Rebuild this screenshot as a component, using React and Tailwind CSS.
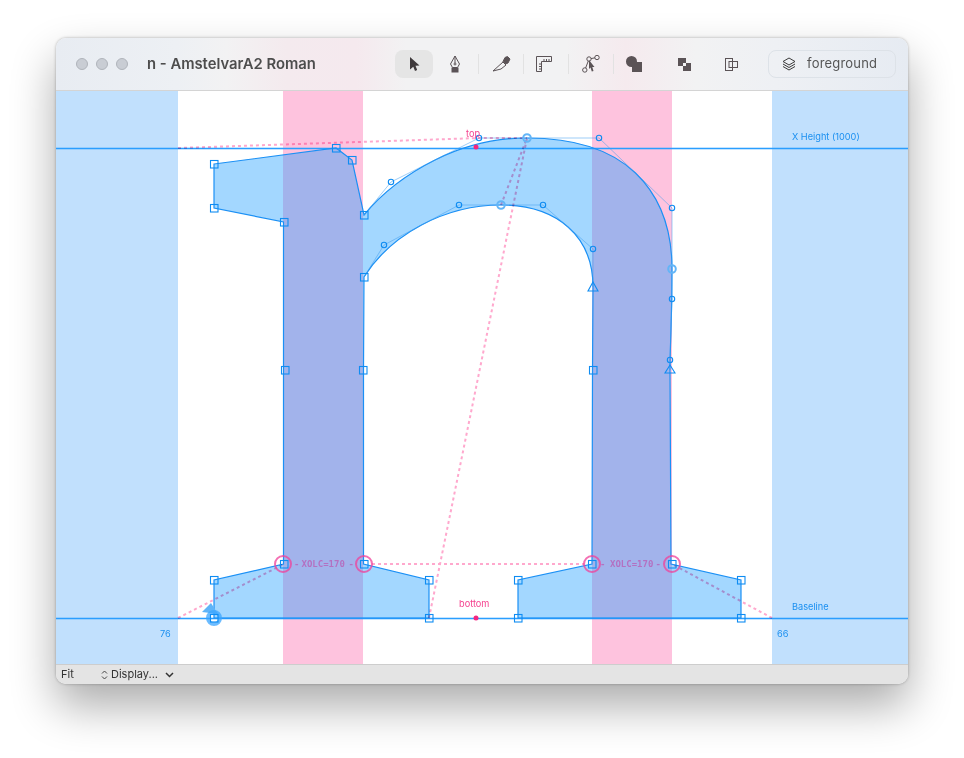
import React from "react";

const squares = [
  [214, 164], [214, 208], [284, 222], [336, 148], [352, 160], [364, 215], [364, 277],
  [285, 370], [363, 370], [593, 370], [284, 564], [364, 564], [214, 580], [214, 618],
  [429, 580], [429, 618], [518, 580], [518, 618], [592, 564], [672, 564], [741, 580], [741, 618],
];
const handles = [
  [391, 182], [479, 138], [599, 138], [672, 208], [672, 299], [670, 360],
  [593, 249], [543, 205], [459, 205], [384, 245],
];
const smooth = [[527, 138], [501, 205], [672, 269]];
const rings = [[283, 564], [364, 564], [592, 564], [672, 564]];

// the curves are quadratic, with on-curve points implied halfway between handles
const outline =
  "M214 164 L336 148 L352 160 L364 215 Q391 182 435 160 Q479 138 527 138 Q599 138 635.5 173 Q672 208 672 269 Q672 299 671 329.5 Q670 360 670 370 L671 564 L741 580 L741 618 L518 618 L518 580 L592 564 L592.5 370 L593 287 Q593 249 568 227 Q543 205 501 205 Q459 205 421.5 225 Q384 245 364 277 L363.5 370 L363.5 564 L429 580 L429 618 L214 618 L214 580 L283.5 564 L283.5 370 L283.5 222 L214 208 Z";

const Divider = () => <div className="w-px h-[20px] bg-[#e2e2e2]" />;

const Glyph = () => (
  <svg className="absolute inset-0 w-full h-full" viewBox="56 91 852 573">
    {/* metric lines */}
    <rect x="56" y="147" width="852" height="3" fill="#3ba5ff" opacity="0.3" />
    <rect x="56" y="148" width="852" height="1" fill="#2a9eff" />
    <rect x="56" y="617" width="852" height="3" fill="#3ba5ff" opacity="0.3" />
    <rect x="56" y="618" width="852" height="1" fill="#2a9eff" />

    <path d={outline} fill="#1a9bff" fillOpacity="0.4" stroke="#1b90f5" strokeWidth="1.2" />

    {/* control arms */}
    <g fill="none" stroke="#3d9df0" strokeOpacity="0.5" strokeWidth="1">
      <path d="M364 215 L391 182 L479 138 L527 138 L599 138 L672 208 L672 269 L672 299 L670 360 L670 370" />
      <path d="M593 287 L593 249 L543 205 L501 205 L459 205 L384 245 L364 277" />
    </g>

    {/* dashed guides */}
    <g className="mix-blend-multiply" fill="none" stroke="#ffa8cd" strokeWidth="2" strokeDasharray="3 3">
      <path d="M178 148 L479 138 L527 138" />
      <path d="M429 618 L527 138" />
      <path d="M178 618 L284 564" />
      <path d="M772 618 L672 564" />
      <path d="M372 564 L584 564" />
      <path d="M501 205 L527 138" />
    </g>

    {/* measurement */}
    {rings.map(([x, y]) => (
      <circle key={x} cx={x} cy={y} r="8" fill="none" stroke="#f0409a" strokeOpacity="0.75" strokeWidth="2" />
    ))}
    <g fontFamily="'DejaVu Sans Mono', monospace" fontWeight="700" fontSize="9" fill="#b766bb" opacity="0.85">
      <text x="294" y="567">-</text>
      <text x="301.5" y="567">XOLC=170</text>
      <text x="348.5" y="567">-</text>
      <text x="600" y="567">-</text>
      <text x="610" y="567">XOLC=170</text>
      <text x="655.5" y="567">-</text>
    </g>

    {/* start point */}
    <path d="M202 612 L211 603 L218 614 Z" fill="#5fb4f8" />
    <circle cx="214" cy="618" r="6" fill="none" stroke="#3ba5ff" strokeOpacity="0.75" strokeWidth="4" />

    {/* points */}
    <g fill="none" stroke="#0f8cf2" strokeWidth="1.1">
      {squares.map(([x, y]) => (
        <rect key={`${x}-${y}`} x={x - 3.5} y={y - 3.5} width="7.5" height="7.5" />
      ))}
      {handles.map(([x, y]) => (
        <circle key={`${x}-${y}`} cx={x} cy={y} r="2.7" />
      ))}
      <path d="M593 282 L598 291 L588 291 Z" />
      <path d="M670 365 L675 373 L665 373 Z" />
    </g>
    <g fill="none" stroke="#63b5f7" strokeWidth="2">
      {smooth.map(([x, y]) => (
        <circle key={x} cx={x} cy={y} r="3.8" />
      ))}
    </g>

    {/* anchors and labels */}
    <circle cx="476" cy="147" r="2.5" fill="#f5267f" />
    <circle cx="476" cy="618" r="2.5" fill="#f5267f" />
    <g fontFamily="Inter, sans-serif" fontSize="9.2">
      <text x="466" y="137" fill="#f5408e">top</text>
      <text x="459" y="607" fill="#f5408e">bottom</text>
      <text x="792" y="140" fill="#1a8ff0">X Height (1000)</text>
      <text x="792" y="610" fill="#1a8ff0">Baseline</text>
      <text x="160" y="637" fill="#1a8ff0">76</text>
      <text x="777" y="637" fill="#1a8ff0">66</text>
    </g>
  </svg>
);

const App = () => {
  return (
    <div className="w-[964px] h-[758px] bg-white pt-[38px] pl-[56px] overflow-hidden">
      <div className="w-[852px] h-[646px] flex flex-col rounded-[10px] overflow-hidden shadow-[0_22px_45px_rgba(0,0,0,0.33),0_0_3px_rgba(0,0,0,0.3)]">
        {/* title bar */}
        <div className="h-[53px] shrink-0 flex items-center border-b border-[#d4d4d4] bg-[linear-gradient(90deg,#e8ecf2_0px,#edf0f4_120px,#f2f2f3_170px,#f4eaee_230px,#f5e9ee_300px,#f2f2f3_350px,#f2f2f3_510px,#f5eaee_570px,#f2f2f3_640px,#eef0f4_720px,#e6ebf2_852px)]">
          <div className="flex gap-[8px] ml-[20px]">
            <div className="w-[12px] h-[12px] rounded-full bg-[#c9cdd4] border border-[#b0b4bb]" />
            <div className="w-[12px] h-[12px] rounded-full bg-[#c9cdd4] border border-[#b0b4bb]" />
            <div className="w-[12px] h-[12px] rounded-full bg-[#c9cdd4] border border-[#b0b4bb]" />
          </div>
          <div className="ml-[19px] w-[248px] font-['Inter',sans-serif] font-semibold text-[14.8px] text-[#4d4d4d]">n - AmstelvarA2 Roman</div>

          <div className="flex items-center h-[28px] text-[#5b5356]">
            <div className="w-[38px] h-[28px] rounded-lg bg-[#e5e5e5] flex items-center justify-center">
              <svg width="16" height="16" viewBox="0 0 16 16" fill="#3f3a3c"><path d="M4 1 L13.5 9.5 L9.5 9.8 L11.2 14 L9 15 L7.3 10.8 L4 13.5 Z" /></svg>
            </div>
            <div className="w-[38px] ml-[3px] flex justify-center">
              <svg width="14" height="18" viewBox="0 0 14 18" fill="none" stroke="#5b5356"><path d="M7 1 L11.5 9 L9.5 12.5 H4.5 L2.5 9 Z M7 1 V8" /><circle cx="7" cy="9" r="1" /><rect x="4" y="13" width="6" height="4" fill="#5b5356" /></svg>
            </div>
            <div className="ml-[3.5px]"><Divider /></div>
            <div className="w-[38px] ml-[3.5px] flex justify-center">
              <svg width="19" height="16" viewBox="0 0 19 16" fill="none" stroke="#5b5356"><path d="M1 15 L11 6 L14 9 L9 13 Z" /><path d="M13 1.5 L15.5 0.5 L18 3 L16 7 L13.5 8 L11 5.5 Z" fill="#5b5356" /></svg>
            </div>
            <div className="ml-[2.5px]"><Divider /></div>
            <div className="w-[38px] ml-[1.5px] flex justify-center">
              <svg width="16" height="16" viewBox="0 0 16 16" fill="none" stroke="#5b5356"><path d="M0.5 15.5 V0.5 H15.5 V5.5 H5.5 V15.5 Z" /><path d="M8 3 V5.5 M10.5 3 V5.5 M13 3 V5.5 M3 8 H5.5 M3 10.5 H5.5 M3 13 H5.5" /></svg>
            </div>
            <div className="ml-[4.5px]"><Divider /></div>
            <div className="w-[38px] ml-[3.5px] flex justify-center">
              <svg width="18" height="18" viewBox="0 0 18 18" fill="none" stroke="#5b5356"><circle cx="2.8" cy="15" r="2.2" /><circle cx="7" cy="4" r="2.2" /><circle cx="15" cy="2.5" r="2.2" /><path d="M3.6 13 L6.3 6 M9 3.6 L13 2.8" /><path d="M7 5 L12.5 12 L10.3 12 L11.5 16 L9.8 16.6 L8.5 12.6 L7 14 Z" fill="#5b5356" stroke="none" /></svg>
            </div>
            <div className="ml-[2.5px]"><Divider /></div>
            <div className="w-[38px] ml-[1.5px] flex justify-center">
              <svg width="16" height="16" viewBox="0 0 16 16" fill="#5b5356"><circle cx="5.5" cy="5.5" r="5.5" /><rect x="6" y="6" width="10" height="10" /></svg>
            </div>
            <div className="w-[38px] ml-[12px] flex justify-center">
              <svg width="13" height="13" viewBox="0 0 13 13" fill="#5b5356"><rect x="0" y="0" width="8" height="8" /><rect x="5" y="5" width="8" height="8" /><rect x="5" y="5" width="3" height="3" fill="#f2f2f3" /></svg>
            </div>
            <div className="w-[38px] ml-[9px] flex justify-center">
              <svg width="13" height="13" viewBox="0 0 13 13" fill="none" stroke="#5b5356"><rect x="0.5" y="0.5" width="7" height="12" /><rect x="4" y="3.5" width="8.5" height="6" /><path d="M7.5 3.5 V9.5" /></svg>
            </div>
            <div className="ml-[18px] w-[128px] h-[28px] rounded-lg border border-[#dde2e8] flex items-center">
              <svg className="ml-[13px]" width="14" height="14" viewBox="0 0 14 14" fill="none" stroke="#3b3b3b"><path d="M7 1 L13 4.5 L7 8 L1 4.5 Z" /><path d="M1 7 L7 10.5 L13 7" /><path d="M1 9.5 L7 13 L13 9.5" /></svg>
              <span className="ml-[11px] font-['Inter',sans-serif] text-[13px] tracking-[0.2px] text-[#555555]">foreground</span>
            </div>
          </div>
        </div>

        {/* canvas */}
        <div className="relative flex-1 flex bg-white">
          <div className="w-[122px] bg-[#c1e0fd]" />
          <div className="w-[105px]" />
          <div className="w-[80px] bg-[#fec3de]" />
          <div className="w-[229px]" />
          <div className="w-[80px] bg-[#fec3de]" />
          <div className="w-[100px]" />
          <div className="flex-1 bg-[#c1e0fd]" />
          <Glyph />
        </div>

        {/* bottom bar */}
        <div className="h-[20px] shrink-0 flex items-center border-t border-[#cdcdcd] bg-[#e4e4e4] font-['Inter',sans-serif] text-[11px] text-[#333333]">
          <span className="ml-[5px] w-[40px]">Fit</span>
          <svg width="7" height="10" viewBox="0 0 7 10" fill="none" stroke="#444444"><path d="M1 3.5 L3.5 1 L6 3.5 M1 6.5 L3.5 9 L6 6.5" /></svg>
          <span className="ml-[3px] w-[54px]">Display...</span>
          <svg width="9" height="6" viewBox="0 0 9 6" fill="none" stroke="#333333" strokeWidth="1.5"><path d="M1 1 L4.5 4.5 L8 1" /></svg>
        </div>
      </div>
    </div>
  );
};

export default App;
